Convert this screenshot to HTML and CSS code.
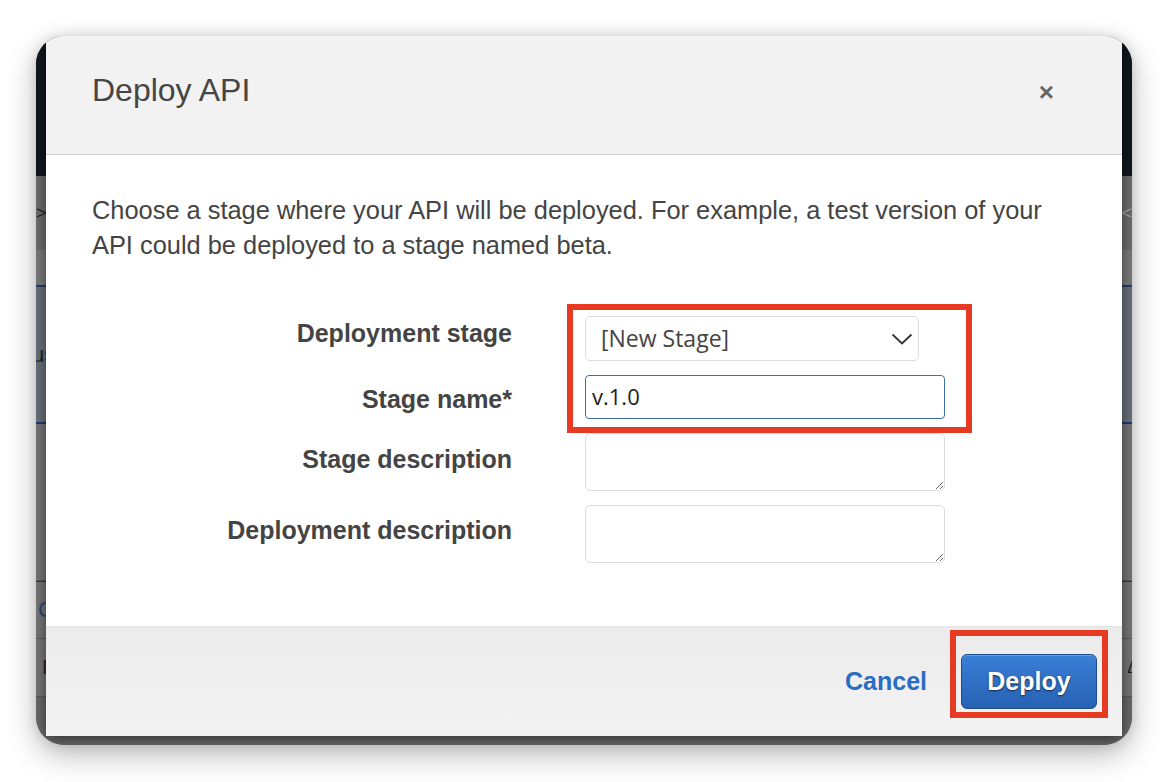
FILE: index.html
```html
<!DOCTYPE html>
<html lang="en">
<head>
<meta charset="utf-8">
<title>Deploy API</title>
<link rel="stylesheet" href="styles.css">
</head>
<body>
<div class="page">
  <div class="window">
    <div class="backdrop">
      <div class="bd-nav"></div>
      <div class="bd-crumb"><span class="bd-glyph">&gt;</span><span class="bd-glyph bd-glyph-r">&lt;</span></div>
      <div class="bd-sub"></div>
      <div class="bd-panel"><span class="bd-glyph bd-us">us</span></div>
      <div class="bd-area"></div>
      <div class="bd-row bd-row-blue"><span class="bd-glyph bd-c">C</span></div>
      <div class="bd-row"><span class="bd-glyph bd-i">I</span><span class="bd-glyph bd-delta">&#916;</span></div>
      <div class="bd-bottom"></div>
    </div>

    <div class="modal">
      <div class="modal-header">
        <h1 class="modal-title">Deploy API</h1>
        <button class="close" type="button">&#215;</button>
      </div>
      <div class="modal-body">
        <p class="intro">Choose a stage where your API will be deployed. For example, a test version of your API could be deployed to a stage named beta.</p>
        <div class="form">
          <label class="lbl lbl-1">Deployment stage</label>
          <div class="select">
            <span>[New Stage]</span>
            <svg class="chev" width="22" height="12" viewBox="0 0 22 12"><polyline points="1.5,1.5 11,10.5 20.5,1.5" fill="none" stroke="#333" stroke-width="1.8"/></svg>
          </div>
          <label class="lbl lbl-2">Stage name*</label>
          <input class="text" type="text" value="v.1.0">
          <label class="lbl lbl-3">Stage description</label>
          <textarea class="area"></textarea>
          <label class="lbl lbl-4">Deployment description</label>
          <textarea class="area"></textarea>
        </div>
      </div>
      <div class="modal-footer">
        <a class="cancel" href="#">Cancel</a>
        <button class="deploy" type="button">Deploy</button>
      </div>
    </div>

    <div class="annot annot-form"></div>
    <div class="annot annot-btn"></div>
  </div>
</div>
</body>
</html>
```

FILE: styles.css
```css
* { box-sizing: border-box; }

html, body {
  margin: 0;
  background: #ffffff;
  font-family: "Liberation Sans", Arial, sans-serif;
}

.page {
  width: 1168px;
  height: 782px;
  padding: 36px;
}

.window {
  position: relative;
  height: 709px;
  border-radius: 28px;
  overflow: hidden;
  background: #777;
  box-shadow: 0 10px 30px rgba(0, 0, 0, 0.28), 0 0 12px rgba(0, 0, 0, 0.12);
}

/* ---------- dimmed page behind the dialog ---------- */
.backdrop {
  display: flex;
  flex-direction: column;
  height: 100%;
}
.bd-nav { height: 140px; background: #12171f; }
.bd-crumb {
  height: 74px;
  background: #6e6e6e;
  display: flex;
  justify-content: space-between;
  align-items: center;
  color: #222;
  font-size: 14px;
}
.bd-sub { height: 37px; background: #7c7c7c; border-bottom: 2px solid #1f3d6e; }
.bd-panel {
  height: 137px;
  background: #6b727d;
  border-bottom: 2px solid #1f3d6e;
  display: flex;
  align-items: center;
}
.bd-area { height: 157px; background: #777; border-bottom: 1px solid #5c5c5c; }
.bd-row {
  height: 58px;
  background: #777;
  border-bottom: 1px solid #5c5c5c;
  display: flex;
  align-items: center;
  justify-content: space-between;
}
.bd-row-blue { border-top: 1px solid #1f3d6e; }
.bd-bottom { flex: 1; background: #6a6a6a; }
.bd-glyph { color: #222; font-size: 18px; }
.bd-glyph-r { color: #aaa; }
.bd-us { margin-left: -4px; font-size: 22px; }
.bd-c { color: #1e4a82; font-size: 22px; margin-left: 2px; }
.bd-i { margin-left: 6px; font-size: 20px; }
.bd-delta { margin-right: -6px; font-size: 16px; }

/* ---------- dialog ---------- */
.modal {
  position: absolute;
  left: 10px;
  top: -11px;
  width: 1076px;
  height: 711px;
  display: flex;
  flex-direction: column;
  background: #ffffff;
  box-shadow: 0 3px 14px rgba(0, 0, 0, 0.55);
}

.modal-header {
  height: 130px;
  flex: none;
  background: #f2f2f2;
  border-bottom: 1px solid #cfcfcf;
  padding: 0 68px 0 46px;
  display: flex;
  align-items: center;
  justify-content: space-between;
}
.modal-title {
  margin: 0;
  font-size: 32px;
  font-weight: normal;
  line-height: 1;
  color: #454545;
}
.close {
  border: 0;
  background: none;
  padding: 0;
  margin-top: 4px;
  font-family: "Liberation Sans", Arial, sans-serif;
  font-size: 26px;
  font-weight: bold;
  line-height: 1;
  color: #666;
}

.modal-body {
  flex: 1;
  padding: 38px 40px 0 46px;
}
.intro {
  margin: 0;
  max-width: 962px;
  font-size: 25.4px;
  line-height: 35px;
  color: #444;
}

.form {
  margin-top: 53px;
  display: grid;
  grid-template-columns: 420px 360px;
  column-gap: 73px;
  row-gap: 14px;
  align-items: start;
}
.lbl {
  text-align: right;
  font-size: 25px;
  font-weight: bold;
  line-height: 25px;
  color: #444;
}
.lbl-1 { padding-top: 5px; }
.lbl-2 { padding-top: 12px; }
.lbl-3 { padding-top: 14px; }
.lbl-4 { padding-top: 13px; }

.select {
  width: 334px;
  height: 45px;
  border: 1px solid #dcdcdc;
  border-radius: 5px;
  padding: 0 5px 1px 15px;
  display: flex;
  align-items: center;
  justify-content: space-between;
  font-family: "Open Sans", "Noto Sans", sans-serif;
  font-size: 23px;
  color: #444;
}
.chev { margin-top: 2px; }

.text {
  width: 360px;
  height: 44px;
  margin: 0;
  border: 1px solid #3d6ea8;
  border-radius: 4px;
  padding: 0 6px 2px;
  font-family: "Open Sans", "Noto Sans", sans-serif;
  font-size: 22px;
  color: #222;
  outline: none;
  background: #fff;
}

.area {
  display: block;
  width: 360px;
  height: 58px;
  margin: 0;
  border: 1px solid #dcdcdc;
  border-radius: 5px;
  background: #fff;
}

.modal-footer {
  height: 110px;
  flex: none;
  border-top: 1px solid #e3e3e3;
  background: linear-gradient(#ebebeb, #f3f3f3);
  padding-right: 25px;
  display: flex;
  align-items: center;
  justify-content: flex-end;
  gap: 34px;
}
.cancel {
  font-size: 25px;
  font-weight: bold;
  color: #2b6cc3;
  text-decoration: none;
}
.deploy {
  width: 136px;
  height: 55px;
  border: 1px solid #1d4c8a;
  border-radius: 6px;
  background: linear-gradient(#3a7fd6, #2761b3);
  box-shadow: inset 0 1px 0 rgba(255, 255, 255, 0.25);
  font-family: "Liberation Sans", Arial, sans-serif;
  font-size: 25px;
  font-weight: bold;
  color: #fff;
  text-shadow: 0 1px 2px rgba(0, 0, 0, 0.65);
  padding: 0;
}

/* ---------- red annotation frames ---------- */
.annot {
  position: absolute;
  border: 6px solid #e63a22;
}
.annot-form { left: 531px; top: 268px; width: 405px; height: 129px; }
.annot-btn { left: 914px; top: 594px; width: 158px; height: 88px; }
```
